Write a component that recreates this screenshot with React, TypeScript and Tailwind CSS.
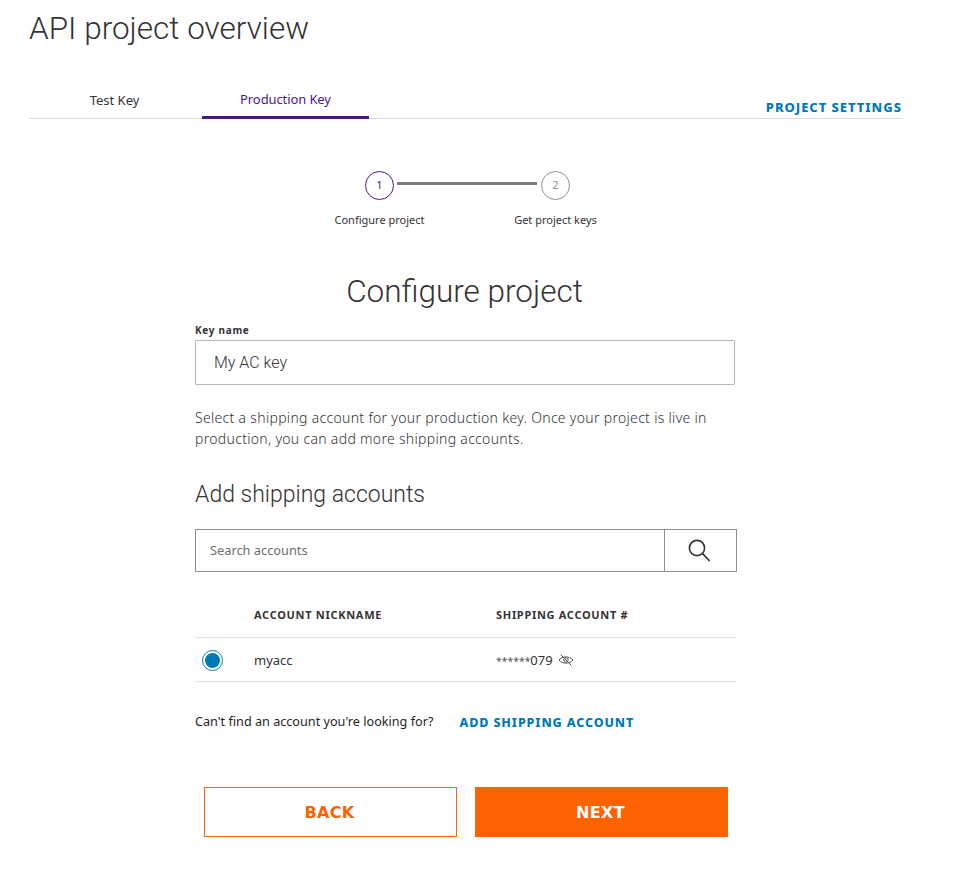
const roboto = "font-['Roboto',sans-serif]";
const body = "font-['Noto_Sans',sans-serif]";

const Step = ({ num, label, active }: { num: number; label: string; active?: boolean }) => (
  <div className="flex w-[120px] flex-col items-center">
    <div
      className={`flex h-[29px] w-[29px] items-center justify-center rounded-full border text-[11px] ${
        active ? "border-[#4d148c] text-[#4d148c]" : "border-[#8e8e8e] text-[#8e8e8e]"
      }`}
    >
      {num}
    </div>
    <span className="mt-[12px] text-[11px] leading-[16px] text-[#333333]">{label}</span>
  </div>
);

const SearchIcon = () => (
  <svg width="24" height="24" viewBox="0 0 24 24" fill="none" stroke="#333333" strokeWidth="1.6" className="mr-[3px] mb-[2px]">
    <circle cx="10" cy="10" r="7.6" />
    <path d="M15.6 15.6 22.6 23" />
  </svg>
);

const HiddenIcon = () => (
  <svg width="16" height="12" viewBox="0 0 16 12" fill="none" stroke="#555555" strokeWidth="1" className="mt-[1px] ml-[5px]">
    <path d="M1 6C4.5 1.8 11 1.8 15 6 11 10.2 4.5 10.2 1 6Z" />
    <circle cx="8" cy="6" r="2.2" />
    <path d="M2.5 .5 13.5 11.5" />
  </svg>
);

export default function App() {
  return (
    <div className={`h-[872px] w-[980px] overflow-hidden bg-white ${body}`}>
      <div className="ml-[29px] w-[873px]">
        <h1 className={`pt-[10px] text-[31.5px] leading-[38px] font-light text-[#333333] ${roboto}`}>
          API project overview
        </h1>

        <div className="mt-[35px] flex h-[36px] items-end justify-between border-b border-[#dcdcdc]">
          <div className="flex">
            <button className="h-[36px] w-[173px] pt-[2px] pr-[2px] text-[13px] text-[#333333]">Test Key</button>
            <button className="-mb-px h-[37px] w-[167px] border-b-[3px] border-[#4d148c] pt-[1px] text-[13px] tracking-[-0.1px] text-[#4d148c]">
              Production Key
            </button>
          </div>
          <a className="pb-[3px] text-[13px] leading-[16px] font-extrabold tracking-[0.95px] text-[#007ab7]">
            PROJECT SETTINGS
          </a>
        </div>

        <div className="mt-[52px] flex justify-center pl-[4px]">
          <Step num={1} label="Configure project" active />
          <div className="mt-[11px] mr-[-41px] ml-[-43px] h-[3px] w-[140px] bg-[#7d7d7d]" />
          <Step num={2} label="Get project keys" />
        </div>

        <h2 className={`mt-[45px] pr-[2px] text-center text-[31.5px] leading-[38px] font-light text-[#333333] ${roboto}`}>
          Configure project
        </h2>

        <div className="ml-[166px] w-[542px]">
          <label className="mt-[12px] block text-[10px] leading-[14px] font-bold tracking-[0.7px] text-[#333333]">
            Key name
          </label>
          <div className={`mt-[3px] flex h-[45px] w-[540px] items-center rounded-[1px] border border-[#b8b8b8] pl-[18px] text-[16px] font-light text-[#333333] ${roboto}`}>
            My AC key
          </div>

          <p className="mt-[22px] w-[540px] text-[14px] leading-[21px] font-light tracking-[0.31px] text-[#333333]">
            Select a shipping account for your production key. Once your project is live in production, you can add more shipping accounts.
          </p>

          <h3 className={`mt-[32px] text-[23px] leading-[28px] font-light text-[#333333] ${roboto}`}>
            Add shipping accounts
          </h3>

          <div className="mt-[20px] flex h-[43px] border border-[#8e8e8e]">
            <div className="flex flex-1 items-center pl-[14px] text-[12.8px] text-[#6e6e6e]">Search accounts</div>
            <div className="flex w-[72px] items-center justify-center border-l border-[#8e8e8e]">
              <SearchIcon />
            </div>
          </div>

          <div className="mt-[22px] flex h-[44px] items-start border-b border-[#e3e3e3] pt-[13px] text-[11px] leading-[16px] font-bold tracking-[0.7px] text-[#333333]">
            <span className="ml-[59px] w-[242px]">ACCOUNT NICKNAME</span>
            <span>SHIPPING ACCOUNT #</span>
          </div>

          <div className="flex h-[44px] items-center border-b border-[#e3e3e3] text-[13px] text-[#333333]">
            <span className="mt-[2px] ml-[7px] flex h-[21px] w-[21px] items-center justify-center rounded-full border border-[#007ab7]">
              <span className="h-[15px] w-[15px] rounded-full bg-[#007ab7]" />
            </span>
            <span className="ml-[31px] w-[242px] pt-[3px]">myacc</span>
            <span className="pt-[3px]">
              <span className="text-[10.4px] text-[#555555]">******</span>079
            </span>
            <HiddenIcon />
          </div>

          <div className="mt-[30px] flex items-start">
            <span className="text-[12.65px] leading-[18px] text-[#1f1f1f]">Can't find an account you're looking for?</span>
            <a className="mt-[3px] ml-[26px] text-[12.5px] leading-[16px] font-extrabold tracking-[0.9px] text-[#007ab7]">
              ADD SHIPPING ACCOUNT
            </a>
          </div>

          <div className="mt-[56px] ml-[9px] flex gap-[18px] font-['DejaVu_Sans',sans-serif] text-[16px] font-bold tracking-[0.3px]">
            <button className="h-[50px] w-[253px] border border-[#ff6200] pt-[2px] pr-[2px] text-[#ff6200]">BACK</button>
            <button className="h-[50px] w-[253px] bg-[#ff6200] pt-[2px] pr-[2px] text-white">NEXT</button>
          </div>
        </div>
      </div>
    </div>
  );
}
